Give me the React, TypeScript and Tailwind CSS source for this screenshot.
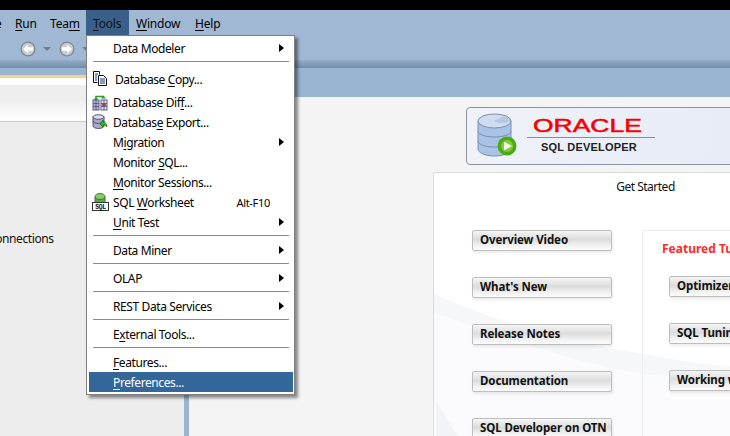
import React from "react";

type Item =
    | { kind: "sep" }
    | { kind: "item"; label: string; sub?: boolean; icon?: React.ReactNode; shortcut?: string; active?: boolean; tall?: boolean };

// "&" marks the mnemonic letter
function Mnemonic({ text }: { text: string }) {
    const i = text.indexOf("&");
    if (i < 0) return <span>{text}</span>;
    return (
        <span>
            {text.slice(0, i)}
            <span className="underline underline-offset-2 decoration-1">{text[i + 1]}</span>
            {text.slice(i + 2)}
        </span>
    );
}

function CopyIcon() {
    return (
        <svg width="16" height="16" viewBox="0 0 16 16" fill="none">
            <path d="M1.500 .5h6l0 3M1.500 .5v11h4" stroke="#111" fill="#fff" />
            <path d="M6.500 4.500h5l3 3v7h-8z" stroke="#111" fill="#fff" />
            <path d="M8 8h5M8 10h5M8 12h5M3 3h3M3 5h2M3 7h2M3 9h2" stroke="#1b2f7a" />
        </svg>
    );
}

function DiffIcon() {
    return (
        <svg width="16" height="18" viewBox="0 0 16 18" fill="none">
            <path d="M4 6V3.500h7V5" stroke="#2e9b2e" strokeWidth="1.600" />
            <path d="M1.500 5.500l2.500 2.500 2.500-2.500zM9 5.500l2.500-3 2.500 3z" fill="#2e9b2e" />
            <rect x="1" y="7" width="6" height="10" fill="#b9b4d8" stroke="#5d5a86" />
            <rect x="9" y="7" width="6" height="10" fill="#e9e6f2" stroke="#5d5a86" />
            <rect x="10" y="10" width="4" height="4" fill="#e23b20" />
            <path d="M1 10.500h6M1 13.500h6M4 7v10M9 10.500h6M9 13.500h6M12 7v10" stroke="#5d5a86" />
        </svg>
    );
}

function ExportIcon() {
    return (
        <svg width="16" height="16" viewBox="0 0 16 16" fill="none">
            <path d="M1 3v9c0 1.400 2.600 2.500 5.500 2.500S12 13.400 12 12V3z" fill="#a9a7c4" stroke="#4f4f70" />
            <ellipse cx="6.500" cy="3" rx="5.500" ry="2.300" fill="#dcdbe8" stroke="#4f4f70" />
            <path d="M1 7c0 1.400 2.600 2.400 5.500 2.400S12 8.400 12 7" stroke="#4f4f70" />
            <path d="M8 10l3 3 0-2c2 0 3 .5 4 2-.2-3-1.500-5-4-5V6z" fill="#2fb52f" stroke="#146914" strokeWidth=".7" />
        </svg>
    );
}

function WorksheetIcon() {
    return (
        <svg width="18" height="18" viewBox="0 0 18 18" fill="none">
            <path d="M3 3.500v6h10v-6z" fill="#58a83f" />
            <ellipse cx="8" cy="3.500" rx="5" ry="3" fill="#8bcb6b" stroke="#3d7d2d" />
            <path d="M3 4v6h10V4" stroke="#3d7d2d" />
            <rect x=".5" y="9.500" width="16" height="8" fill="#fff" stroke="#333" />
            <text x="8.500" y="16" textAnchor="middle" fontSize="6.500" fontWeight="700" fontFamily="Liberation Mono, monospace" fill="#111">SQL</text>
        </svg>
    );
}

function NavButton({ forward }: { forward?: boolean }) {
    return (
        <svg width="16" height="16" viewBox="0 0 16 16" className={forward ? "-scale-x-100" : ""}>
            <circle cx="8" cy="8" r="7.500" fill="#7d8894" />
            <circle cx="8" cy="8" r="6.200" fill="#c9ccd0" />
            <path d="M3 8L8 3.500v2.800h5v3.400H8v2.800z" fill="#fff" />
        </svg>
    );
}

function DropArrow() {
    return <div className="w-0 h-0 border-x-[4px] border-x-transparent border-t-[4px] border-t-[#6f7d8c]" />;
}

const items: Item[] = [
    { kind: "item", label: "Data Modeler", sub: true },
    { kind: "sep" },
    { kind: "item", label: "Database &Copy...", icon: <CopyIcon />, tall: true },
    { kind: "item", label: "Database Dif&f...", icon: <DiffIcon /> },
    { kind: "item", label: "Databas&e Export...", icon: <ExportIcon /> },
    { kind: "item", label: "M&igration", sub: true },
    { kind: "item", label: "Monitor &SQL..." },
    { kind: "item", label: "&Monitor Sessions..." },
    { kind: "item", label: "SQL &Worksheet", icon: <WorksheetIcon />, shortcut: "Alt-F10" },
    { kind: "item", label: "&Unit Test", sub: true },
    { kind: "sep" },
    { kind: "item", label: "Data Miner", sub: true },
    { kind: "sep" },
    { kind: "item", label: "OLAP", sub: true },
    { kind: "sep" },
    { kind: "item", label: "REST Data Services", sub: true },
    { kind: "sep" },
    { kind: "item", label: "E&xternal Tools..." },
    { kind: "sep" },
    { kind: "item", label: "&Features..." },
    { kind: "item", label: "&Preferences...", active: true },
];

function ToolsMenu() {
    return (
        <div className="absolute left-[86px] top-[35px] w-[209px] h-[360px] bg-white border border-[#7f7f7f] pl-[2px] pr-[1px] py-[2px] shadow-[3px_3px_3px_rgba(0,0,0,0.45)] text-[12px] tracking-[-0.4px] text-black">
            {items.map((item, idx) =>
                item.kind === "sep" ? (
                    <div key={idx} className="h-[8px] pt-[3px] px-[4px]">
                        <div className="h-px bg-[#8c8c8c]" />
                    </div>
                ) : (
                    <div
                        key={idx}
                        className={`relative flex items-center pt-[2px] pl-[24px] pr-[9px] ${item.tall ? "h-[26px]" : "h-[20px]"} ${item.active ? "bg-[#336699] text-white" : ""}`}
                    >
                        {item.icon && (
                            <div className="absolute left-[3px] top-0 bottom-0 flex items-center">{item.icon}</div>
                        )}
                        <div className={item.tall ? "ml-[2px]" : ""}>
                            <Mnemonic text={item.label} />
                        </div>
                        {item.shortcut && <div className="ml-auto mr-[14px] text-[11px] tracking-[-0.3px]">{item.shortcut}</div>}
                        {item.sub && (
                            <div className="ml-auto -mt-[2px] w-0 h-0 border-y-[4px] border-y-transparent border-l-[5px] border-l-black" />
                        )}
                    </div>
                )
            )}
        </div>
    );
}

function WelcomeButton({ label }: { label: string }) {
    return (
        <div className="w-[140px] h-[21px] shrink-0 flex items-center pl-[7px] pb-px whitespace-nowrap overflow-hidden rounded-[2px] border border-[#bdbdbd] bg-[linear-gradient(#f5f5f5,#dcdcdc_45%,#f0f0f0_75%,#fdfdfd)] shadow-[1px_2px_3px_rgba(0,0,0,0.08)] text-[11.500px] tracking-[-0.1px] font-bold text-[#111]">
            {label}
        </div>
    );
}

function DatabaseLogo() {
    return (
        <svg width="42" height="46" viewBox="0 0 42 46" className="shrink-0">
            <path d="M1 8v28c0 3.500 7 7 16.500 7S34 39.500 34 36V8z" fill="#a9c3e6" stroke="#7b8fb0" />
            <ellipse cx="17.500" cy="8" rx="16.500" ry="7" fill="#cfdcf0" stroke="#7b8fb0" />
            <path d="M17 8l10-5c4 1 6 3 6 5-4 3-12 3-16 0z" fill="#b5c7e2" />
            <path d="M1 18c0 3.500 7 6 16.500 6S34 21.500 34 18M1 28c0 3.500 7 6 16.500 6S34 31.500 34 28" fill="none" stroke="#7b8fb0" />
            <circle cx="30" cy="33" r="9.500" fill="#4eaa12" />
            <circle cx="30" cy="33" r="6" fill="#7ecb3a" />
            <path d="M27 28.500l8 4.500-8 4.500z" fill="#f2f7e8" />
        </svg>
    );
}

export default function App() {
    return (
        <div className="relative flex flex-col w-[730px] h-[436px] overflow-hidden bg-[#ededed] font-['Noto_Sans',sans-serif]">
            <div className="h-[10px] bg-black shrink-0" />

            {/* menu bar */}
            <div className="h-[26px] shrink-0 flex items-stretch bg-[#a0b8d3] text-[12px] tracking-[-0.2px] text-black">
                <div className="-ml-[5px] w-[20px] pt-px flex items-center">e</div>
                <div className="w-[35px] pt-px flex items-center"><Mnemonic text="&Run" /></div>
                <div className="w-[36px] pt-px flex items-center"><Mnemonic text="Tea&m" /></div>
                <div className="w-[43px] pt-px flex items-center pl-[7px] bg-[#3a6089] text-[#111] rounded-[1px]"><Mnemonic text="&Tools" /></div>
                <div className="ml-[7px] w-[59px] pt-px flex items-center"><Mnemonic text="&Window" /></div>
                <div className="pt-px flex items-center"><Mnemonic text="&Help" /></div>
            </div>

            {/* toolbar */}
            <div className="h-[24px] shrink-0 flex items-center pl-[20px] pt-[2px] gap-[7px] bg-[#a0b8d3]">
                <NavButton />
                <DropArrow />
                <div className="ml-[1px]"><NavButton forward /></div>
                <DropArrow />
            </div>
            <div className="h-[8px] shrink-0 bg-[linear-gradient(#94adc8,#718dab)]" />

            <div className="flex flex-1 min-h-0">
                <div className="w-[184px] shrink-0 flex flex-col overflow-hidden">
                    <div className="h-[7px] bg-[#9ab5d1]" />
                    <div className="h-[3px] bg-[#fbcf85]" />
                    <div className="h-[7px] bg-white" />
                    <div className="h-[37px] bg-[linear-gradient(#eeeeee_40%,#ffffff)] border-b border-[#cccccc]" />
                    <div className="flex-1 pt-[108px] text-[12px] tracking-[-0.4px] text-[#111] whitespace-nowrap">
                        <div className="-ml-[12px]">Connections</div>
                    </div>
                </div>
                <div className="w-[5px] shrink-0 bg-[#9ab5d1]" />

                <div className="flex-1 min-w-0 flex flex-col bg-[#f4f4f4] overflow-hidden">
                    <div className="h-[29px] shrink-0 bg-[#9ab5d1]" />

                    {/* banner */}
                    <div className="ml-[277px] mt-[10px] w-[400px] h-[58px] shrink-0 flex items-center pl-[10px] rounded-[4px] border border-[#8b93a3] bg-[linear-gradient(100deg,#f0f2f8,#e2e9f5)]">
                        <DatabaseLogo />
                        <div className="ml-[8px] w-[128px] flex flex-col items-start">
                            <div className="ml-[6px] mt-[1px] h-[16px] leading-[16px] inline-block origin-left scale-x-[1.47] text-[18px] font-['Liberation_Sans',sans-serif] [-webkit-text-stroke:0.5px_#f80000] text-[#f80000]">ORACLE</div>
                            <div className="w-full h-px mt-[3px] bg-[#8c8c99]" />
                            <div className="mt-[1px] ml-[14px] text-[11px] font-['Liberation_Sans',sans-serif] font-bold tracking-[0.2px] text-[#222]">SQL DEVELOPER</div>
                        </div>
                    </div>

                    {/* get started card */}
                    <div className="relative ml-[244px] mt-[7px] w-[424px] flex-1 shrink-0 bg-white border-l border-t border-[#dcdcdc] rounded-tl-[3px]">
                        <svg width="424" height="264" viewBox="0 0 424 264" className="absolute left-0 top-0">
                            <path d="M0 130C70 160 130 175 209 190C250 197 300 204 424 214V264H0z" fill="#fbfbfd" />
                            <path d="M0 121C70 152 130 168 209 181C250 189 300 195 424 206V215C300 206 250 205 209 201C130 188 60 160 0 140z" fill="#f6f7f9" />
                            <path d="M2 228C10 240 16 254 26 264H2z" fill="#f1f3f6" />
                        </svg>
                        <div className="relative flex flex-col">
                            <div className="h-[28px] pt-[5px] text-center text-[12px] tracking-[-0.5px] text-[#111]">Get Started</div>
                            <div className="flex pl-[38px] pt-[29px]">
                                <div className="flex flex-col gap-[26px]">
                                    <WelcomeButton label="Overview Video" />
                                    <WelcomeButton label="What's New" />
                                    <WelcomeButton label="Release Notes" />
                                    <WelcomeButton label="Documentation" />
                                    <WelcomeButton label="SQL Developer on OTN" />
                                </div>
                                <div className="ml-[30px] pl-[19px] pt-[9px] border-l border-t border-[#ececec]">
                                    <div className="h-[36px] text-[12px] font-bold text-[#ff2a2a]">Featured Tutorials</div>
                                    <div className="ml-[7px] flex flex-col gap-[26px]">
                                        <WelcomeButton label="Optimizer Access Paths" />
                                        <WelcomeButton label="SQL Tuning Advisor" />
                                        <WelcomeButton label="Working with Data" />
                                    </div>
                                </div>
                            </div>
                        </div>
                    </div>
                </div>
            </div>

            <ToolsMenu />
        </div>
    );
}
